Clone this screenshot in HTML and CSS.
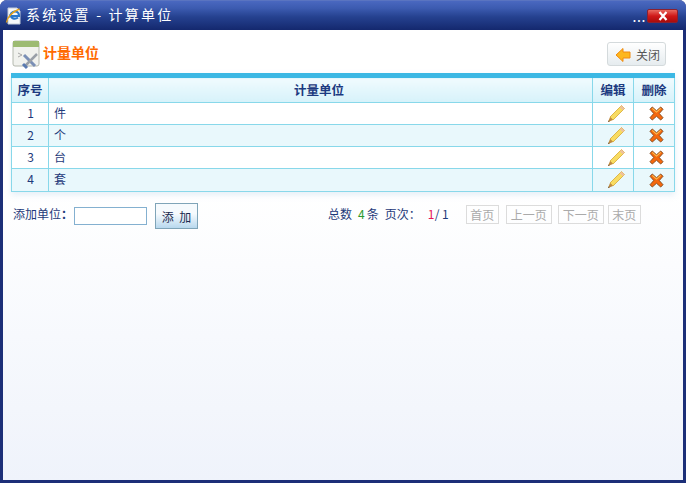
FILE: index.html
```html
<!DOCTYPE html>
<html lang="zh">
<head>
<meta charset="utf-8">
<title>系统设置 - 计算单位</title>
<link rel="stylesheet" href="styles.css">
</head>
<body>
<div class="window">
  <header class="titlebar">
    <svg class="ie" width="18" height="18" viewBox="0 0 18 18"><path d="M3 1h9l3 3v13H3z" fill="#f6f8fa" stroke="#c4ccd8"/><path d="M5 10.500c0-4 2.500-6 5-6s4 2 4 4.500H6.500c0 3 4 3.500 6.500 1.500" fill="none" stroke="#2a78cc" stroke-width="2.200"/><path d="M1.500 15.500c.5-5 6-11 13-13.500" fill="none" stroke="#e8a418" stroke-width="1.400"/></svg>
    <span class="title">系统设置 - 计算单位</span>
    <span class="dots">...</span>
    <span class="close-x"><svg width="14" height="10" viewBox="0 0 14 10"><path d="M3.500 1l7 8M10.500 1l-7 8" stroke="#fff" stroke-width="2.200"/></svg></span>
  </header>
  <main class="content">
    <div class="head">
      <div class="head-title">
        <svg class="cfg" width="28" height="30" viewBox="0 0 28 30"><rect x="1" y="1" width="26" height="25" rx="2" fill="#f1f2ee" stroke="#b4b8ae"/><rect x="1" y="1" width="26" height="6" fill="#9dbb72"/><path d="M6 13l4 2-4 2" fill="none" stroke="#a8a8a8"/><path d="M12 15l11 11" stroke="#7a8fb5" stroke-width="3"/><path d="M25 14L13 26" stroke="#9aa0a8" stroke-width="2.500"/><path d="M11 24l4 4" stroke="#5a7ab0" stroke-width="3"/></svg>
        <span class="head-text">计量单位</span>
      </div>
      <button class="close-btn" type="button">
        <svg class="back" width="16" height="14" viewBox="0 0 16 14"><path d="M1 7l7-6.500V4h7v6H8v3.500z" fill="#fdb71e" stroke="#f08a10"/></svg>
        关闭
      </button>
    </div>
    <table class="grid">
      <colgroup><col class="c1"><col><col class="c3"><col class="c4"></colgroup>
      <thead><tr><th>序号</th><th class="th-main">计量单位</th><th>编辑</th><th>删除</th></tr></thead>
      <tbody>
        <tr><td class="num">1</td><td>件</td><td class="ic"><svg class="pen" width="18" height="18" viewBox="0 0 18 18"><use href="#p"/></svg></td><td class="ic"><svg class="del" width="15" height="15" viewBox="0 0 16 16"><use href="#x"/></svg></td></tr>
        <tr class="alt"><td class="num">2</td><td>个</td><td class="ic"><svg class="pen" width="18" height="18" viewBox="0 0 18 18"><use href="#p"/></svg></td><td class="ic"><svg class="del" width="15" height="15" viewBox="0 0 16 16"><use href="#x"/></svg></td></tr>
        <tr><td class="num">3</td><td>台</td><td class="ic"><svg class="pen" width="18" height="18" viewBox="0 0 18 18"><use href="#p"/></svg></td><td class="ic"><svg class="del" width="15" height="15" viewBox="0 0 16 16"><use href="#x"/></svg></td></tr>
        <tr class="alt"><td class="num">4</td><td>套</td><td class="ic"><svg class="pen" width="18" height="18" viewBox="0 0 18 18"><use href="#p"/></svg></td><td class="ic"><svg class="del" width="15" height="15" viewBox="0 0 16 16"><use href="#x"/></svg></td></tr>
      </tbody>
    </table>
    <div class="foot">
      <div class="add">
        <label class="add-label" for="u">添加单位<b>：</b></label><input id="u" class="inp" type="text"><button class="add-btn" type="button">添&nbsp;&nbsp;加</button>
      </div>
      <div class="pager">
        <span>总数</span><b class="green">4</b><span class="tiao">条</span>
        <span class="ci">页次：</span><b class="pink">1</b><span class="of">/ 1</span>
        <span class="pg p1">首页</span><span class="pg p2">上一页</span><span class="pg p3">下一页</span><span class="pg p4">末页</span>
      </div>
    </div>
  </main>
</div>
<svg class="defs" width="0" height="0">
  <defs>
    <g id="p"><path d="M14.500 .5l3 3L6 15 3 12z" fill="#f8dc62" stroke="#d8a830" stroke-width=".8"/><path d="M14.500 .5l3 3-1.700 1.700-3-3z" fill="#eec0a0"/><path d="M3 12l3 3-5 2z" fill="#c08a40"/><path d="M1.800 15.500L1 17l1.800-.7z" fill="#503010"/></g>
    <g id="x"><path d="M3.500 1l4.500 4 4.500-4 2.500 2.500L11 8l4 4.500-2.500 2.500L8 11l-4.500 4L1 12.500 5 8 1 3.500z" fill="#f4680e" stroke="#6a3a10" stroke-width=".8"/><path d="M3.500 2.500L8 6.500l4.500-4" fill="none" stroke="#fcc050" stroke-width="1.100"/></g>
  </defs>
</svg>
</body>
</html>
```

FILE: styles.css
```css
* { box-sizing: border-box; }
html, body { margin: 0; padding: 0; background: #fff; }
body { width: 686px; height: 483px; overflow: hidden; font: 12px/14px "Noto Sans CJK SC", "Liberation Sans", sans-serif; color: #1e3a7a; }
.defs { display: block; height: 0; }
.window { width: 686px; height: 483px; display: flex; flex-direction: column; background: #1c2f78; border-radius: 7px 7px 0 0; padding: 0 3px 3px; }
.titlebar { flex: none; height: 30px; margin: 0 -3px; padding: 0 8px 0 5px; display: flex; align-items: center; border-radius: 7px 7px 0 0; border-top: 1px solid #5a74c0; background: linear-gradient(#4a68c0 0, #3c5bb0 25%, #25418f 55%, #14286e 100%); }
.ie { flex: none; margin-top: 1px; }
.title { margin-left: 3px; margin-top: -3px; color: #fff; font-size: 14px; letter-spacing: 2.200px; white-space: nowrap; }
.dots { margin-left: auto; color: #fff; font-size: 14px; line-height: 14px; letter-spacing: .6px; }
.close-x { width: 31px; height: 14px; margin-left: 1px; display: flex; align-items: center; justify-content: center; background: linear-gradient(#e86a60, #d01818 50%, #a80c0c); border: 1px solid #8a2030; border-radius: 2px; }
.content { flex: 1; min-height: 0; padding: 10px 8px 0; background: linear-gradient(#fff 36%, #eff3fb 100%); }
.head { height: 33px; display: flex; justify-content: space-between; align-items: flex-start; }
.head-title { display: flex; align-items: center; gap: 3px; color: #ff6a00; font-size: 14px; font-weight: bold; height: 30px; margin-left: 1px; }
.head-text { padding-bottom: 6px; }
.back { margin-top: 2px; }
.close-btn { width: 59px; height: 24px; margin: 2px 9px 0 0; padding: 0 0 0 2px; display: flex; align-items: center; justify-content: center; gap: 5px; font: 12px "Noto Sans CJK SC", sans-serif; color: #555; background: linear-gradient(#fff, #e6ecef); border: 1px solid #d4dadc; border-radius: 3px; }
.grid { width: 664px; border-collapse: collapse; table-layout: fixed; border-top: 5px solid #3cb8e4; box-shadow: 0 3px 6px rgba(150,190,225,.25); background: #fff; }
.c1 { width: 37px; } .c3 { width: 41px; } .c4 { width: 41px; }
.grid th, .grid td { border: 1px solid #88d8ea; padding: 0; height: 22px; }
.grid th { height: 27px; font-size: 12.500px; font-weight: bold; color: #1c3a80; background: linear-gradient(#f0fbfe, #d6f2fa); }
.grid th.th-main { padding-right: 3px; }
.grid td { padding-left: 5px; font-size: 12px; padding-bottom: 2px; }
.grid tr:last-child td { height: 23px; }
.grid td.num { padding-left: 1px; text-align: center; }
.grid td.ic { padding: 0; text-align: center; line-height: 0; }
.grid svg { vertical-align: middle; }
.grid .pen { margin-left: 6px; }
.grid .del { margin-left: 4px; }
.alt td { background: #e9f8fc; }
.foot { display: flex; align-items: flex-start; margin-top: 11px; }
.add { width: 317px; display: flex; align-items: center; padding-left: 2px; height: 26px; }
.add-label { width: 61px; white-space: nowrap; padding-bottom: 4px; }
.add-label b { font-weight: bold; }
.inp { width: 73px; height: 18px; border: 1px solid #84b0d0; background: #fff; padding: 0; }
.add-btn { width: 43px; height: 26px; margin-left: 8px; padding: 0; font: 12px "Noto Sans CJK SC", sans-serif; color: #1a2a50; background: linear-gradient(#f6fafd 40%, #b8d8ee); border: 1px solid #7fa4b8; }
.pager { display: flex; align-items: center; height: 20px; margin-top: 1px; white-space: nowrap; }
.green { color: #2a9a30; font-weight: normal; margin-left: 6px; }
.tiao { margin-left: 2px; }
.ci { margin-left: 6px; }
.pink { color: #e8145a; font-weight: normal; margin-left: 7px; width: 7px; }
.of { margin-left: 0; }
.pg { height: 19px; line-height: 17px; border: 1px solid #dcdcdc; color: #aaa; text-align: center; }
.p1 { width: 33px; margin-left: 17px; }
.p2 { width: 46px; margin-left: 7px; }
.p3 { width: 46px; margin-left: 6px; }
.p4 { width: 33px; margin-left: 4px; }
```
